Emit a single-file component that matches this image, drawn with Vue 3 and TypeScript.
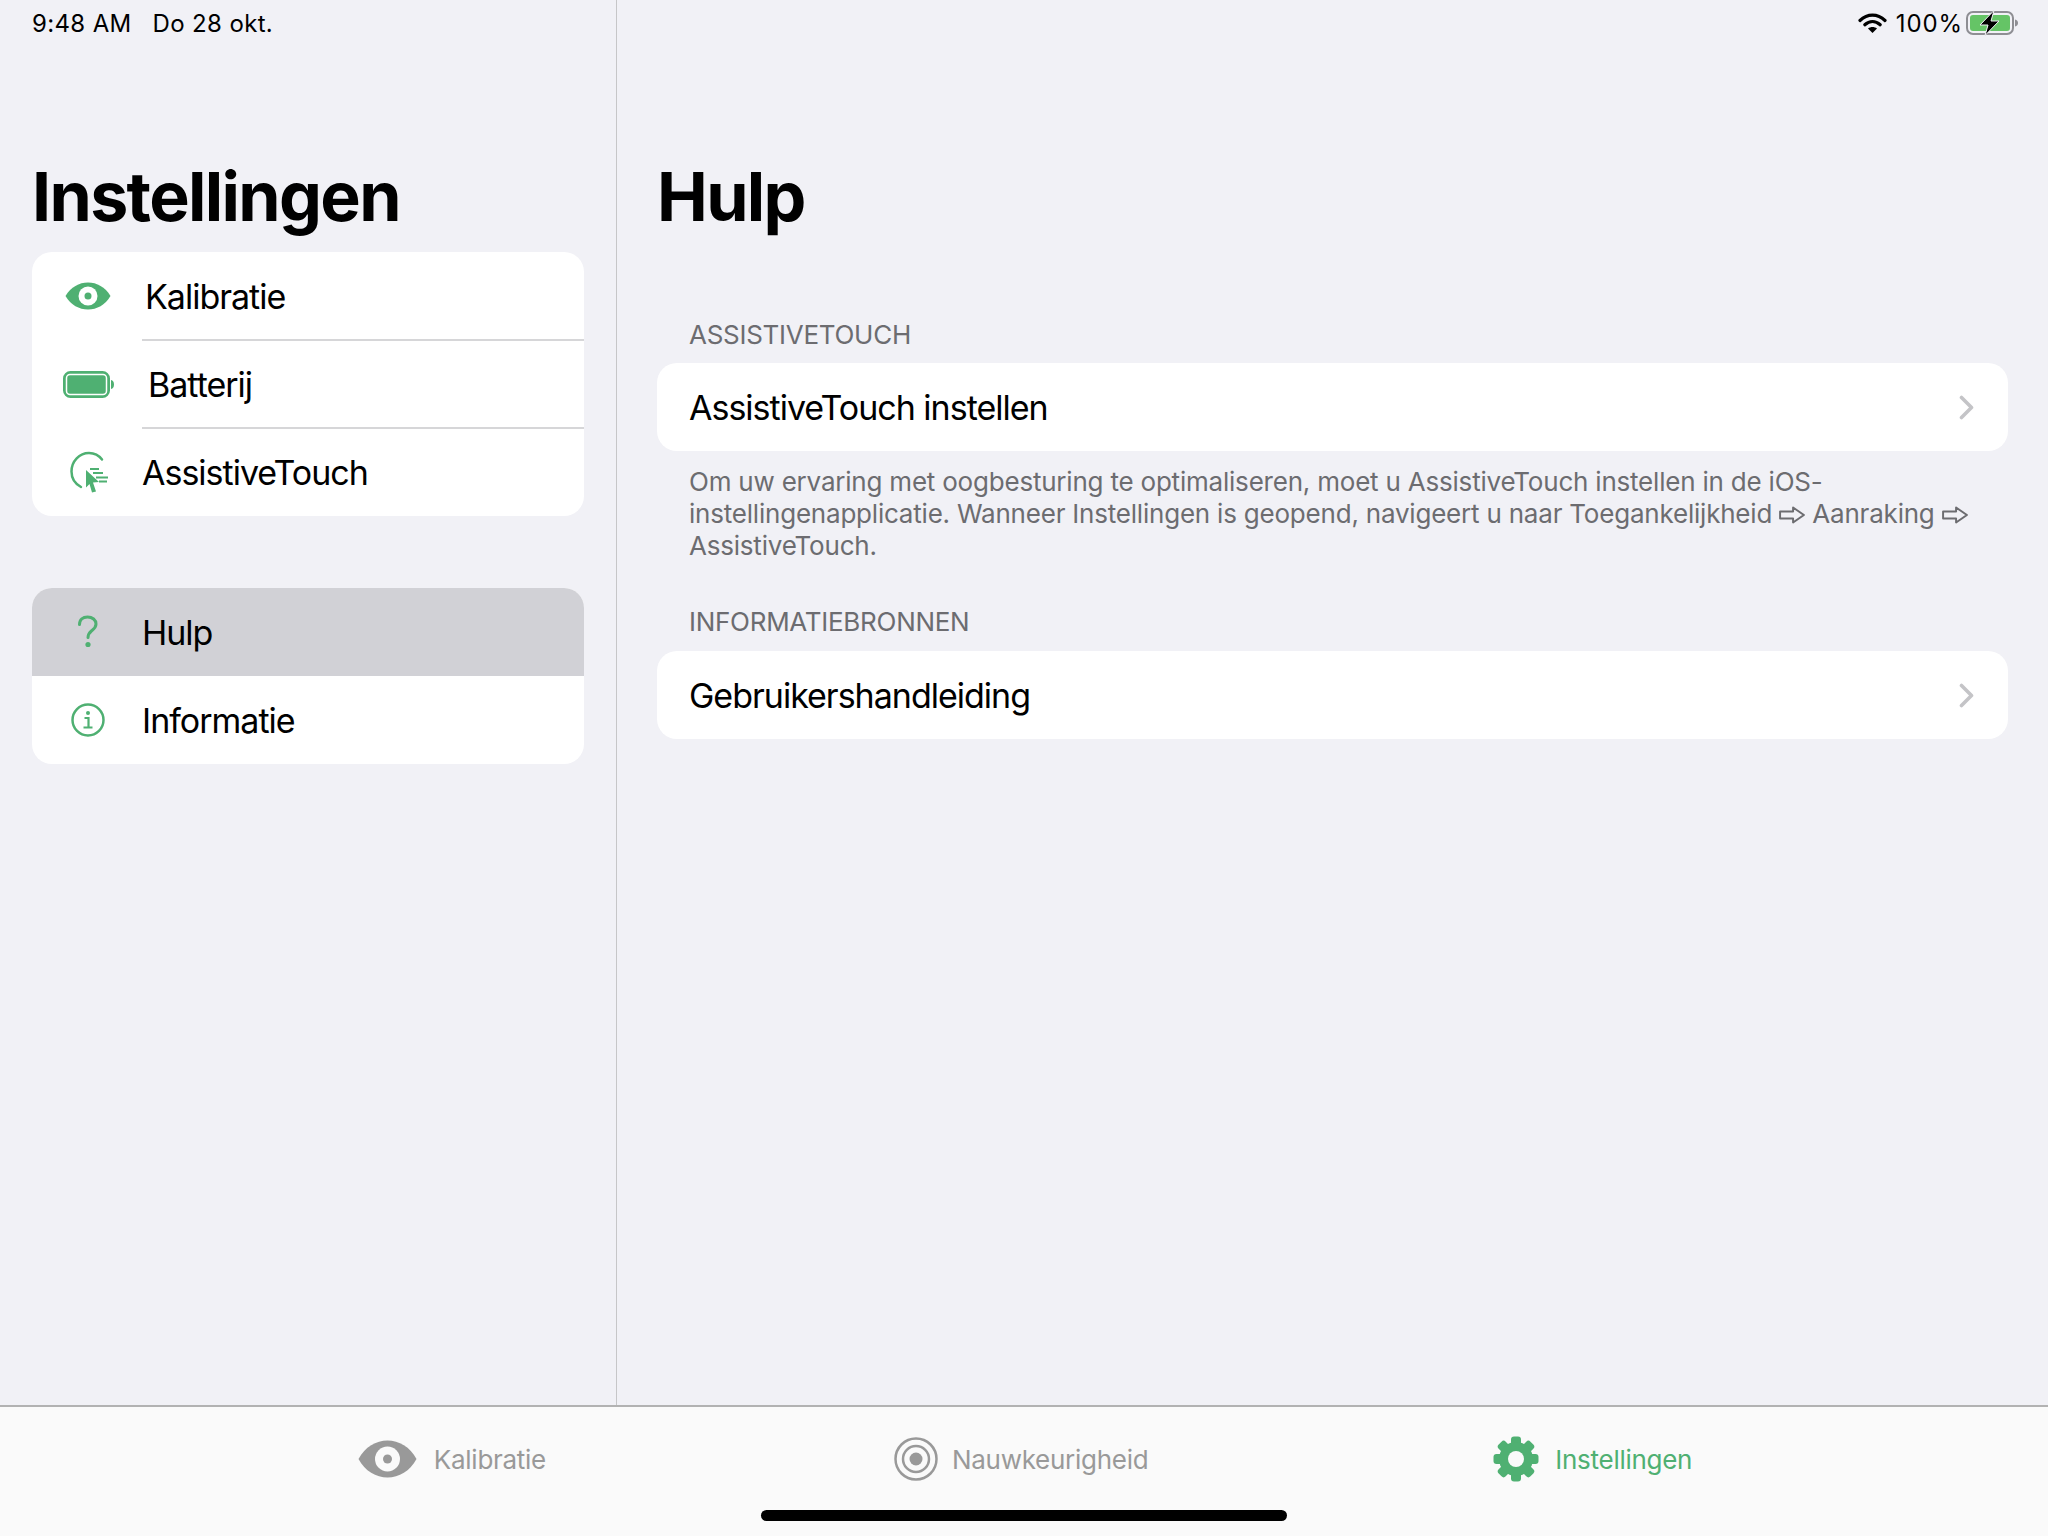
<script setup lang="ts">
interface NavItem {
  label: string;
  icon: string;
  textLeft: number;
  active?: boolean;
}

const primaryNav: NavItem[] = [
  { label: 'Kalibratie', icon: 'eye', textLeft: 34 },
  { label: 'Batterij', icon: 'battery', textLeft: 37 },
  { label: 'AssistiveTouch', icon: 'assistive', textLeft: 31 },
];

const secondaryNav: NavItem[] = [
  { label: 'Hulp', icon: 'help', textLeft: 31, active: true },
  { label: 'Informatie', icon: 'info', textLeft: 31 },
];

const navGroups = [primaryNav, secondaryNav];
const gearTeeth = [0, 45, 90, 135, 180, 225, 270, 315];
</script>

<template>
  <div class="app">
    <div class="status">
      <div class="status-left">
        <span>9:48 AM</span>
        <span>Do 28 okt.</span>
      </div>
      <div class="status-right">
        <svg width="29" height="20" viewBox="0 0 29 20">
          <path d="M2 7.500C9.500 .4 19.500 .4 27 7.500" fill="none" stroke="#000" stroke-width="3.200" stroke-linecap="round" />
          <path d="M6.800 11.800C11.500 7.600 17.500 7.600 22.200 11.800" fill="none" stroke="#000" stroke-width="3.200" stroke-linecap="round" />
          <path d="M14.500 20L10 15.500C12.500 13.500 16.500 13.500 19 15.500Z" fill="#000" />
        </svg>
        <span class="percent">100%</span>
        <svg width="53" height="26" viewBox="0 0 53 26">
          <rect x="1" y="2" width="46" height="22" rx="6" fill="none" stroke="#8e8e93" stroke-width="2" />
          <rect x="4" y="5" width="40" height="16" rx="3" fill="#65c466" />
          <path d="M49 9.500C51 10 52 11.200 52 13S51 16 49 16.500Z" fill="#8e8e93" />
          <path d="M28 .5L14 15H22L19 25.500L33 11H25Z" fill="#000" stroke="#f1f1f6" stroke-width="1" />
        </svg>
      </div>
    </div>

    <div class="main">
      <aside class="sidebar">
        <h1 class="large-title">Instellingen</h1>
        <div class="nav-groups">
          <div v-for="(group, g) in navGroups" :key="g" class="card">
            <div
              v-for="item in group"
              :key="item.label"
              class="nav-row"
              :class="{ active: item.active }"
            >
              <span class="nav-icon">
                <svg v-if="item.icon === 'eye'" width="46" height="28" viewBox="0 0 46 28">
                  <path d="M.5 14C6 5 14 .5 23 .5S40 5 45.500 14C40 23 32 27.500 23 27.500S6 23 .5 14Z" fill="#4fb072" />
                  <circle cx="23" cy="14" r="9.500" fill="#fff" />
                  <circle cx="23" cy="14" r="3.500" fill="#4fb072" />
                </svg>
                <svg v-else-if="item.icon === 'battery'" width="51" height="27" viewBox="0 0 51 27">
                  <rect x="1.500" y="1.500" width="44" height="24" rx="6" fill="#4fb072" stroke="#4fb072" stroke-width="3" />
                  <rect x="3.500" y="3.500" width="40" height="20" rx="3.500" fill="#4fb072" stroke="#fff" stroke-width="1.500" />
                  <path d="M48 9C50 9.500 51 11 51 13.500S50 17.500 48 18Z" fill="#4fb072" />
                </svg>
                <svg v-else-if="item.icon === 'assistive'" class="nudge" width="40" height="42" viewBox="0 0 40 42">
                  <path d="M11 36C4.500 32.500 1.500 27 1.500 20.500C1.500 10 9.500 2 19 2C24.500 2 29 4.500 32 8.500" fill="none" stroke="#4fb072" stroke-width="2.500" stroke-linecap="round" />
                  <path d="M16 19L29 31L23 31.500L26 40.500L22 41.500L19.500 33L16 36.500Z" fill="#4fb072" />
                  <path d="M20 18H29M23 22H33M26 26.500H38M29 30.500H37" fill="none" stroke="#4fb072" stroke-width="2" />
                </svg>
                <svg v-else-if="item.icon === 'help'" width="22" height="34" viewBox="0 0 22 34">
                  <path d="M2.500 9.500C2.500 4.500 6 2 10.500 2C15.500 2 19 5 19 9C19 12 17.500 13.500 15 15.500C12.500 17.500 11 18.500 11 22.500" fill="none" stroke="#4fb072" stroke-width="3" stroke-linecap="round" />
                  <circle cx="11" cy="29.500" r="2.600" fill="#4fb072" />
                </svg>
                <svg v-else width="34" height="34" viewBox="0 0 34 34">
                  <circle cx="17" cy="17" r="15.500" fill="none" stroke="#4fb072" stroke-width="2.500" />
                  <circle cx="17" cy="10" r="2" fill="#4fb072" />
                  <path d="M13.500 15H17.500V24M12.500 24.500H21.500" fill="none" stroke="#4fb072" stroke-width="2.200" />
                </svg>
              </span>
              <span class="nav-label" :style="{ marginLeft: item.textLeft + 'px' }">{{ item.label }}</span>
            </div>
          </div>
        </div>
      </aside>

      <section class="detail">
        <h1 class="large-title">Hulp</h1>

        <div class="section-head first">ASSISTIVETOUCH</div>
        <div class="link-row">
          <span>AssistiveTouch instellen</span>
          <svg class="chevron" width="15" height="25" viewBox="0 0 15 25">
            <path d="M2.500 2.500L12.500 12.500L2.500 22.500" fill="none" stroke="#c4c4c7" stroke-width="3.600" stroke-linecap="round" stroke-linejoin="round" />
          </svg>
        </div>
        <p class="section-foot">
          Om uw ervaring met oogbesturing te optimaliseren, moet u AssistiveTouch instellen in de iOS-<br />instellingenapplicatie. Wanneer Instellingen is geopend, navigeert u naar Toegankelijkheid
          <svg class="arrow" width="26" height="18" viewBox="0 0 24 18" preserveAspectRatio="none"><path d="M1 5.500H13V1.500L23 9L13 16.500V12.500H1Z" fill="none" stroke="#6c6c70" stroke-width="1.800" stroke-linejoin="round" /></svg>
          Aanraking
          <svg class="arrow" width="26" height="18" viewBox="0 0 24 18" preserveAspectRatio="none"><path d="M1 5.500H13V1.500L23 9L13 16.500V12.500H1Z" fill="none" stroke="#6c6c70" stroke-width="1.800" stroke-linejoin="round" /></svg>
          <br />AssistiveTouch.
        </p>

        <div class="section-head">INFORMATIEBRONNEN</div>
        <div class="link-row">
          <span>Gebruikershandleiding</span>
          <svg class="chevron" width="15" height="25" viewBox="0 0 15 25">
            <path d="M2.500 2.500L12.500 12.500L2.500 22.500" fill="none" stroke="#c4c4c7" stroke-width="3.600" stroke-linecap="round" stroke-linejoin="round" />
          </svg>
        </div>
      </section>
    </div>

    <nav class="tabbar">
      <div class="tab">
        <svg width="59" height="38" viewBox="0 0 59 38">
          <path d="M.5 19C7 7 18 .5 29.500 .5S52 7 58.500 19C52 31 41 37.500 29.500 37.500S7 31 .5 19Z" fill="#999" />
          <circle cx="29.500" cy="19" r="12.500" fill="#fafafa" />
          <circle cx="29.500" cy="19" r="4.500" fill="#999" />
        </svg>
        <span>Kalibratie</span>
      </div>
      <div class="tab middle">
        <svg width="44" height="44" viewBox="0 0 44 44">
          <circle cx="22" cy="22" r="20.500" fill="none" stroke="#999" stroke-width="2.500" />
          <circle cx="22" cy="22" r="13" fill="none" stroke="#999" stroke-width="2.500" />
          <circle cx="22" cy="22" r="6.500" fill="#999" />
        </svg>
        <span>Nauwkeurigheid</span>
      </div>
      <div class="tab selected">
        <svg width="46" height="46" viewBox="0 0 46 46">
          <rect
            v-for="angle in gearTeeth"
            :key="angle"
            x="18"
            y="0.500"
            width="10"
            height="12"
            rx="3"
            fill="#4fb072"
            :transform="`rotate(${angle} 23 23)`"
          />
          <circle cx="23" cy="23" r="17" fill="#4fb072" />
          <circle cx="23" cy="23" r="8" fill="#fafafa" />
        </svg>
        <span>Instellingen</span>
      </div>
      <div class="home-indicator"></div>
    </nav>
  </div>
</template>

<style>
html,
body {
  margin: 0;
  background: #f1f1f6;
}
</style>

<style scoped>
.app {
  position: relative;
  display: flex;
  flex-direction: column;
  width: 2048px;
  height: 1536px;
  overflow: hidden;
  background: #f1f1f6;
  color: #000;
  font-family: Inter, 'Liberation Sans', sans-serif;
}

svg {
  flex: none;
}

.status {
  position: absolute;
  top: 0;
  left: 0;
  right: 0;
  display: flex;
  justify-content: space-between;
  align-items: center;
  height: 46px;
  padding: 0 32px;
  font-size: 24px;
  letter-spacing: 0.35px;
}

.status-left {
  display: flex;
  gap: 21px;
}

.status-right {
  display: flex;
  align-items: center;
  gap: 6px;
  margin-right: -3px;
}

.percent {
  margin: 0 -3px 0 3px;
  letter-spacing: 0.9px;
}

.main {
  flex: 1;
  display: flex;
  min-height: 0;
}

.sidebar {
  width: 617px;
  box-sizing: border-box;
  padding: 0 32px;
  border-right: 1px solid #c6c6c8;
}

.large-title {
  margin: 0;
  padding-top: 155px;
  font-size: 68px;
  line-height: 82px;
  font-weight: 700;
  letter-spacing: -1.65px;
}

.nav-groups {
  display: flex;
  flex-direction: column;
  gap: 72px;
  margin-top: 15px;
}

.card {
  border-radius: 20px;
  background: #fff;
  overflow: hidden;
}

.nav-row {
  position: relative;
  display: flex;
  align-items: center;
  height: 88px;
  padding-left: 33px;
  font-size: 34px;
  letter-spacing: -1px;
}

.nav-row + .nav-row::before {
  content: '';
  position: absolute;
  top: -1px;
  left: 110px;
  right: 0;
  height: 2px;
  background: #d6d6d8;
}

.nav-row.active {
  background: #d1d1d6;
}

.nav-row.active + .nav-row::before {
  display: none;
}

.nav-icon {
  display: flex;
  justify-content: center;
  align-items: center;
  flex: none;
  width: 46px;
}

.nudge {
  margin-left: 3px;
}

.detail {
  flex: 1;
  padding: 0 40px;
}

.section-head {
  padding-left: 32px;
  margin: 44px 0 13px;
  font-size: 26px;
  line-height: 32px;
  letter-spacing: -0.28px;
  color: #6c6c70;
}

.section-head.first {
  margin: 82px 0 12px;
}

.link-row {
  display: flex;
  justify-content: space-between;
  align-items: center;
  height: 88px;
  padding: 0 34px 0 32px;
  border-radius: 20px;
  background: #fff;
  font-size: 34px;
  letter-spacing: -1px;
}

.section-foot {
  margin: 15px 0 0;
  padding: 0 32px;
  font-size: 26px;
  line-height: 32px;
  letter-spacing: -0.21px;
  color: #6c6c70;
}

.arrow {
  vertical-align: -1px;
}

.tabbar {
  position: relative;
  display: flex;
  justify-content: center;
  gap: 345px;
  height: 131px;
  box-sizing: border-box;
  padding: 28px 0 0 2px;
  border-top: 2px solid #b2b2b2;
  background: #fafafa;
}

.tab {
  display: flex;
  align-items: center;
  align-self: flex-start;
  gap: 17px;
  height: 48px;
  font-size: 26px;
  letter-spacing: -0.28px;
  color: #999;
}

.tab.middle {
  gap: 14px;
  margin-left: 3px;
}

.tab.selected {
  gap: 16px;
  color: #4fb072;
}

.home-indicator {
  position: absolute;
  left: 761px;
  bottom: 15px;
  width: 526px;
  height: 11px;
  border-radius: 6px;
  background: #000;
}
</style>
